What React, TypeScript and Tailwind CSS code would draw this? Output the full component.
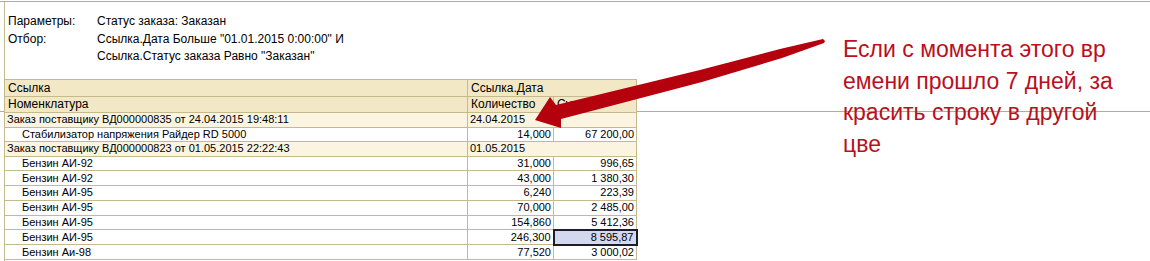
const rows: { name: string; qty: string; sum: string; selected?: boolean }[] = [
  { name: "Бензин АИ-92", qty: "31,000", sum: "996,65" },
  { name: "Бензин АИ-92", qty: "43,000", sum: "1 380,30" },
  { name: "Бензин АИ-95", qty: "6,240", sum: "223,39" },
  { name: "Бензин АИ-95", qty: "70,000", sum: "2 485,00" },
  { name: "Бензин АИ-95", qty: "154,860", sum: "5 412,36" },
  { name: "Бензин АИ-95", qty: "246,300", sum: "8 595,87", selected: true },
  { name: "Бензин Аи-98", qty: "77,520", sum: "3 000,02" },
];

function Arrow() {
  return (
    <svg
      className="absolute left-0 top-0 pointer-events-none"
      width="1150"
      height="261"
      viewBox="0 0 1150 261"
    >
      <polygon
        fill="#b5000d"
        points="535,120 550,97 556,105 700,70 780,49 823,39 825,41 824,43 782,58 702,82 561,119 561,128"
      />
    </svg>
  );
}

export default function App() {
  return (
    <div className="relative w-[1150px] h-[261px] overflow-hidden bg-white text-black font-['Liberation_Sans',Arial,sans-serif]">
      {/* grid line behind the sheet */}
      <div className="absolute left-0 right-0 top-[111px] h-px bg-[#b9ad85]" />

      <div className="mt-px border-t border-[#b9ad85]">
        <div className="ml-[4px] border-l border-[#c6b98c] h-[260px]">
          {/* Parameters */}
          <div className="pt-[11px] pl-[3px] text-[12px] leading-[17.5px]">
            <div className="flex">
              <span className="w-[89px]">Параметры:</span>
              <span>Статус заказа: Заказан</span>
            </div>
            <div className="flex">
              <span className="w-[89px]">Отбор:</span>
              <div>
                <div>Ссылка.Дата Больше "01.01.2015 0:00:00" И</div>
                <div>Ссылка.Статус заказа Равно "Заказан"</div>
              </div>
            </div>
          </div>

          {/* Report table */}
          <table className="mt-[13px] -ml-px border-collapse text-[11px] leading-none relative">
            <colgroup>
              <col className="w-[463px]" />
              <col className="w-[86px]" />
              <col className="w-[83px]" />
            </colgroup>
            <tbody>
              <tr className="h-[17px] bg-[#f2e8c6] text-[12px]">
                <td className="border border-[#c6b98c] px-[3px]">Ссылка</td>
                <td colSpan={2} className="border border-[#c6b98c] px-[3px]">
                  Ссылка.Дата
                </td>
              </tr>
              <tr className="h-[16px] bg-[#f2e8c6] text-[12px]">
                <td className="border border-[#c6b98c] px-[3px]">Номенклатура</td>
                <td className="border border-[#c6b98c] px-[3px]">Количество</td>
                <td className="border border-[#c6b98c] px-[3px]">Сумма</td>
              </tr>
              <tr className="h-[15px] bg-[#faf4e0]">
                <td className="border border-[#c6b98c] px-[2px]">
                  Заказ поставщику ВД000000835 от 24.04.2015 19:48:11
                </td>
                <td colSpan={2} className="border border-[#c6b98c] px-[2px]">
                  24.04.2015
                </td>
              </tr>
              <tr className="h-[14px]">
                <td className="border border-[#c6b98c] pl-[17px]">
                  Стабилизатор напряжения Райдер RD 5000
                </td>
                <td className="border border-[#c6b98c] px-[2px] text-right">14,000</td>
                <td className="border border-[#c6b98c] px-[2px] text-right">67 200,00</td>
              </tr>
              <tr className="h-[15px] bg-[#faf4e0]">
                <td className="border border-[#c6b98c] px-[2px]">
                  Заказ поставщику ВД000000823 от 01.05.2015 22:22:43
                </td>
                <td colSpan={2} className="border border-[#c6b98c] px-[2px]">
                  01.05.2015
                </td>
              </tr>
              {rows.map((r, i) => (
                <tr key={i} className="h-[14.8px]">
                  <td className="border border-[#c6b98c] pl-[17px]">{r.name}</td>
                  <td className="border border-[#c6b98c] px-[2px] text-right">{r.qty}</td>
                  {r.selected ? (
                    <td className="border-2 border-[#1c1c2c] bg-[#d3d8ef] px-[2px] text-right">
                      {r.sum}
                    </td>
                  ) : (
                    <td className="border border-[#c6b98c] px-[2px] text-right">{r.sum}</td>
                  )}
                </tr>
              ))}
            </tbody>
          </table>
        </div>
      </div>

      {/* annotation */}
      <div className="absolute left-[843px] top-[34px] text-[23px] leading-[31.5px] text-[#b8101c] font-['Liberation_Sans',Arial,sans-serif] whitespace-nowrap">
        <div>Если с момента этого вр</div>
        <div>емени прошло 7 дней, за</div>
        <div>красить строку в другой</div>
        <div>цве</div>
      </div>

      <Arrow />
    </div>
  );
}
